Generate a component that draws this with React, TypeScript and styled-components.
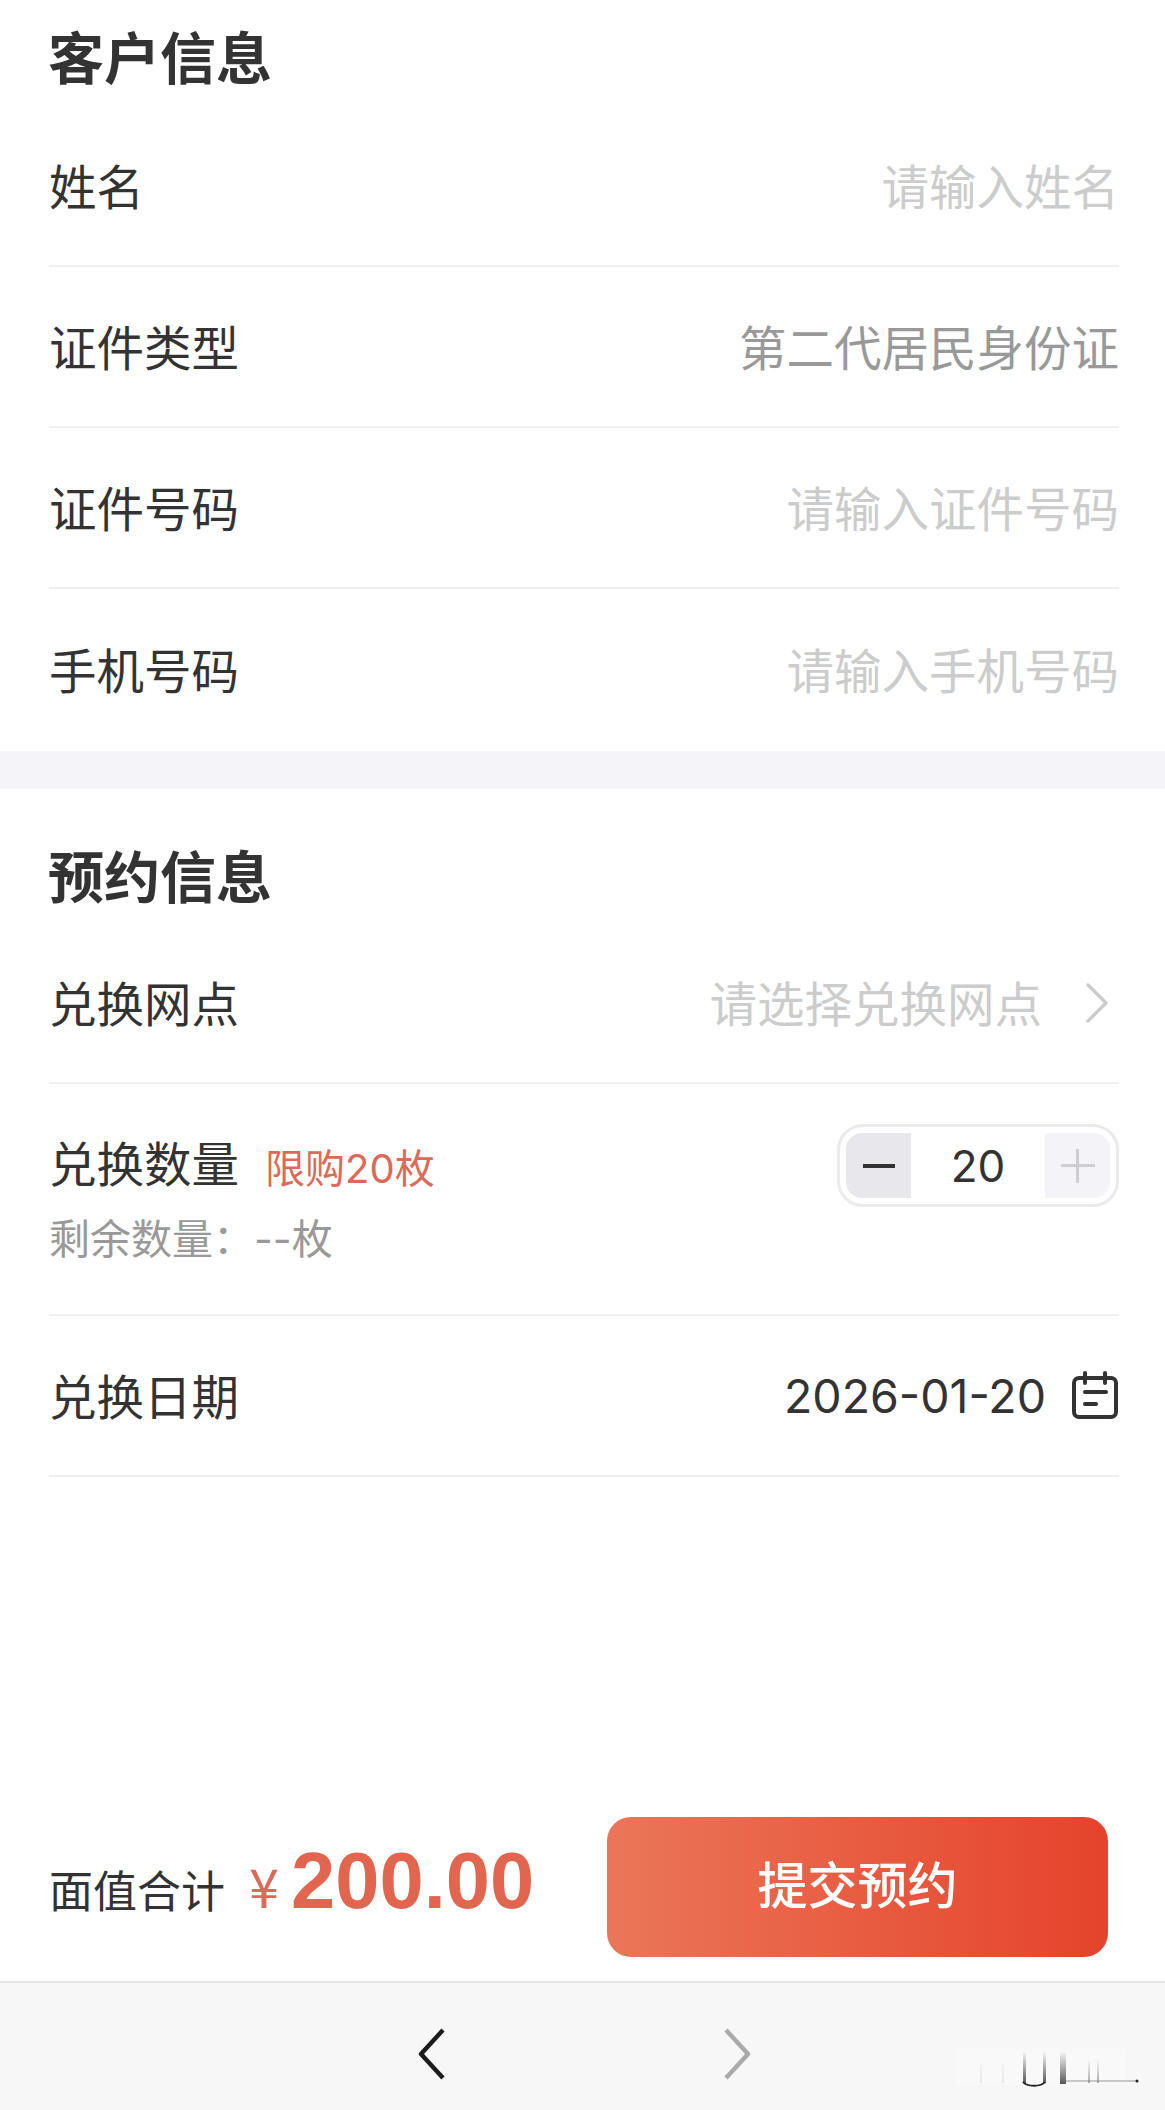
import styled, { createGlobalStyle } from 'styled-components'

const GlobalStyle = createGlobalStyle`
  html, body {
    margin: 0;
    padding: 0;
    background: #fff;
  }
  body {
    font-family: "Noto Sans CJK SC", "Liberation Sans", sans-serif;
    color: #333;
  }
  * {
    box-sizing: border-box;
  }
`

const customerRows = [
  { label: '姓名', value: '请输入姓名', muted: true },
  { label: '证件类型', value: '第二代居民身份证', muted: false },
  { label: '证件号码', value: '请输入证件号码', muted: true },
  { label: '手机号码', value: '请输入手机号码', muted: true },
]

const ChevronRight = () => (
  <svg width="24" height="40" viewBox="0 0 24 40" fill="none">
    <path d="M3 2l18 18L3 38" stroke="#ccc" strokeWidth="3.4" strokeLinecap="round" strokeLinejoin="round" />
  </svg>
)

const CalendarIcon = () => (
  <svg width="48" height="48" viewBox="0 0 48 48" fill="none" stroke="#333" strokeWidth="4" strokeLinecap="round">
    <rect x="3" y="7" width="42" height="39" rx="5" />
    <path d="M14 2v10M34 2v10M14 21h21M14 33h11" />
  </svg>
)

const NavArrow = ({ dir, color }: { dir: 'left' | 'right'; color: string }) => (
  <svg width="28" height="52" viewBox="0 0 28 52" fill="none">
    <path
      d={dir === 'left' ? 'M25 2L3 26l22 24' : 'M3 2l22 24L3 50'}
      stroke={color}
      strokeWidth="4.4"
      strokeLinejoin="round"
    />
  </svg>
)

const Smudge = () => (
  <svg width="225" height="50" viewBox="0 0 225 50" fill="none">
    <defs>
      <linearGradient id="fade" x1="0" y1="0" x2="0" y2="1">
        <stop offset="0" stopColor="#333" stopOpacity="0" />
        <stop offset="1" stopColor="#222" stopOpacity="0.75" />
      </linearGradient>
    </defs>
    <rect x="36" y="4" width="170" height="36" fill="#fff" opacity="0.25" />
    <rect x="60" y="14" width="2" height="24" fill="url(#fade)" opacity="0.12" />
    <rect x="82" y="14" width="2" height="24" fill="url(#fade)" opacity="0.12" />
    <rect x="103" y="6" width="3" height="32" fill="url(#fade)" />
    <rect x="123" y="6" width="3" height="32" fill="url(#fade)" />
    <path d="M103 37c4 5 18 5 22 0" stroke="#222" strokeWidth="2" />
    <rect x="140" y="6" width="6" height="33" fill="url(#fade)" />
    <rect x="168" y="14" width="2" height="24" fill="url(#fade)" opacity="0.5" />
    <rect x="177" y="14" width="2" height="24" fill="url(#fade)" opacity="0.5" />
    <path d="M146 36h70" stroke="#888" strokeWidth="1.6" opacity="0.6" />
    <circle cx="217" cy="36" r="1.5" fill="#222" />
  </svg>
)

export default function App() {
  return (
    <Page>
      <GlobalStyle />
      <Section>
        <SectionTitle>客户信息</SectionTitle>
        {customerRows.map((row, index) => (
          <Row key={row.label} $last={index === customerRows.length - 1}>
            <Label>{row.label}</Label>
            <Value $muted={row.muted}>{row.value}</Value>
          </Row>
        ))}
      </Section>
      <Band />
      <Section>
        <SectionTitle $second>预约信息</SectionTitle>
        <Row>
          <Label>兑换网点</Label>
          <ValueGroup>
            <Value $muted>请选择兑换网点</Value>
            <ArrowSlot>
              <ChevronRight />
            </ArrowSlot>
          </ValueGroup>
        </Row>
        <QuantityRow>
          <QuantityInfo>
            <QuantityHead>
              <Label>兑换数量</Label>
              <Limit>限购20枚</Limit>
            </QuantityHead>
            <Remaining>剩余数量：--枚</Remaining>
          </QuantityInfo>
          <Stepper>
            <StepButton $side="left" $active>
              <Minus />
            </StepButton>
            <StepValue>20</StepValue>
            <StepButton $side="right">
              <Plus />
            </StepButton>
          </Stepper>
        </QuantityRow>
        <Row>
          <Label>兑换日期</Label>
          <ValueGroup>
            <DateText>2026-01-20</DateText>
            <CalendarIcon />
          </ValueGroup>
        </Row>
      </Section>
      <Spacer />
      <Footer>
        <Total>
          <TotalLabel>面值合计</TotalLabel>
          <Currency>¥</Currency>
          <Amount>200.00</Amount>
        </Total>
        <SubmitButton>提交预约</SubmitButton>
      </Footer>
      <BrowserBar>
        <NavArrow dir="left" color="#1c1c1c" />
        <NavArrow dir="right" color="#aaa" />
        <Watermark>
          <Smudge />
        </Watermark>
      </BrowserBar>
    </Page>
  )
}

const Page = styled.div`
  width: 1165px;
  height: 2110px;
  display: flex;
  flex-direction: column;
  background: #fff;
  overflow: hidden;
`

const Section = styled.section`
  padding: 0 46px 0 49px;
`

const SectionTitle = styled.h2<{ $second?: boolean }>`
  margin: 0 0 0 -1px;
  height: ${({ $second }) => ($second ? '134px' : '106px')};
  padding-top: ${({ $second }) => ($second ? '45px' : '15px')};
  font-size: 56px;
  line-height: 80px;
  font-weight: 700;
  color: #333;
`

const Row = styled.div<{ $last?: boolean }>`
  height: ${({ $last }) => ($last ? '162px' : '161px')};
  display: flex;
  align-items: center;
  justify-content: space-between;
  padding-bottom: 2px;
  border-bottom: ${({ $last }) => ($last ? 'none' : '2px solid #f0f0f0')};
`

const Label = styled.span`
  font-size: 47.5px;
  line-height: 64px;
  color: #333;
`

const Value = styled.span<{ $muted?: boolean }>`
  font-size: 47.5px;
  line-height: 64px;
  color: ${({ $muted }) => ($muted ? '#ccc' : '#999')};
`

const ValueGroup = styled.div`
  display: flex;
  align-items: center;
`

const ArrowSlot = styled.div`
  display: flex;
  margin: 2px 10px 0 43px;
`

const Band = styled.div`
  height: 38px;
  background: #f5f5f9;
`

const QuantityRow = styled.div`
  height: 232px;
  display: flex;
  justify-content: space-between;
  align-items: flex-start;
  padding-top: 36px;
  border-bottom: 2px solid #f0f0f0;
`

const QuantityInfo = styled.div`
  display: flex;
  flex-direction: column;
`

const QuantityHead = styled.div`
  display: flex;
  align-items: center;
  gap: 26px;
  height: 84px;
`

const Limit = styled.span`
  margin-top: 14px;
  font-family: "Inter", "Noto Sans CJK SC", sans-serif;
  font-size: 40px;
  line-height: 56px;
  color: #dc6a58;
`

const Remaining = styled.span`
  margin-top: 7px;
  font-family: "Inter", "Noto Sans CJK SC", sans-serif;
  font-size: 41px;
  line-height: 56px;
  color: #999;
`

const Stepper = styled.div`
  width: 282px;
  height: 83px;
  margin-top: 4px;
  display: flex;
  align-items: center;
  justify-content: space-between;
  padding: 0 6px;
  border: 3px solid #ebebeb;
  border-radius: 26px;
`

const StepButton = styled.div<{ $side: 'left' | 'right'; $active?: boolean }>`
  width: 65px;
  height: 65px;
  display: flex;
  align-items: center;
  justify-content: center;
  background: ${({ $active }) => ($active ? '#e8e8ec' : '#f4f4f8')};
  border-radius: ${({ $side }) => ($side === 'left' ? '16px 0 0 16px' : '0 16px 16px 0')};
`

const Minus = styled.div`
  width: 32px;
  height: 4px;
  background: #333;
`

const Plus = styled.div`
  width: 34px;
  height: 34px;
  background:
    linear-gradient(#cfcfd3, #cfcfd3) center / 100% 3px no-repeat,
    linear-gradient(#cfcfd3, #cfcfd3) center / 3px 100% no-repeat;
`

const StepValue = styled.span`
  font-family: "Inter", "Liberation Sans", sans-serif;
  font-size: 44px;
  color: #333;
`

const DateText = styled.span`
  font-family: "Inter", "Liberation Sans", sans-serif;
  font-size: 46.5px;
  color: #333;
  margin: 3px 25px 0 0;
`

const Spacer = styled.div`
  flex: 1;
`

const Footer = styled.div`
  height: 164px;
  display: flex;
  align-items: center;
  justify-content: space-between;
  padding: 0 57px 24px 49px;
`

const Total = styled.div`
  display: flex;
  align-items: baseline;
  margin-bottom: 12px;
`

const TotalLabel = styled.span`
  font-size: 44px;
  color: #333;
`

const Currency = styled.span`
  margin-left: 24px;
  font-size: 54px;
  color: #dc6a58;
`

const Amount = styled.span`
  margin-left: 12px;
  font-family: "Liberation Sans", sans-serif;
  font-size: 79.5px;
  font-weight: 700;
  color: #e2654f;
`

const SubmitButton = styled.button`
  width: 501px;
  height: 140px;
  padding: 0 0 10px;
  border: none;
  border-radius: 24px;
  background: linear-gradient(90deg, #eb7659, #e5432b);
  color: #fff;
  font-family: inherit;
  font-size: 50px;
  font-weight: 500;
`

const BrowserBar = styled.div`
  position: relative;
  height: 129px;
  display: flex;
  align-items: center;
  justify-content: center;
  gap: 277px;
  background: #f7f7f7;
  border-top: 2px solid #e6e6e6;
  padding: 14px 0 0 3px;
`

const Watermark = styled.div`
  position: absolute;
  right: 20px;
  bottom: 15px;
  line-height: 0;
`
